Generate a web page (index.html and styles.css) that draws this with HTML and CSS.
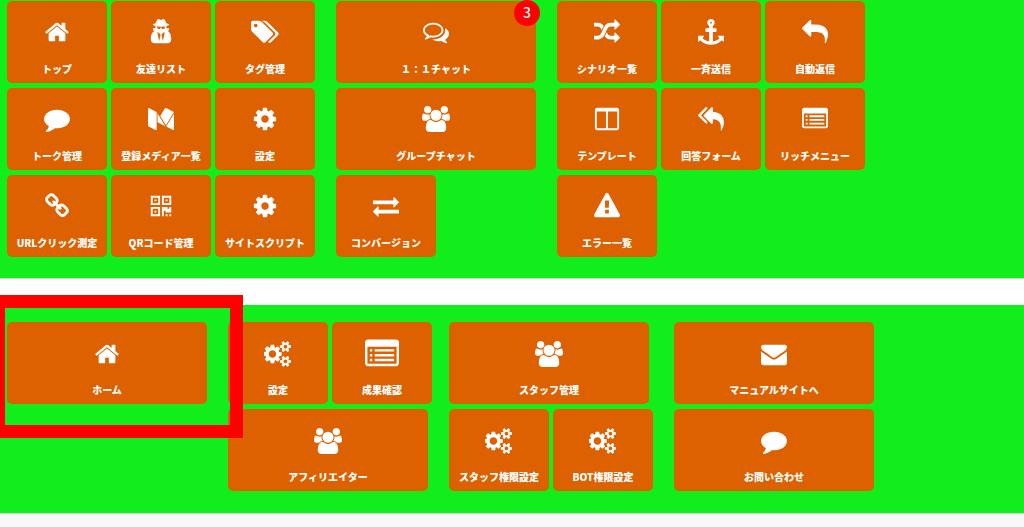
FILE: index.html
```html
<!DOCTYPE html>
<html lang="ja">
<head>
  <meta charset="UTF-8" />
  <meta name="viewport" content="width=device-width, initial-scale=1" />
  <title>管理メニュー</title>
  <link rel="stylesheet" href="styles.css">
</head>
<body>
  <svg class="sprite" aria-hidden="true">
    <symbol id="home" viewBox="0 0 1792 1792"><path d="M1472 992v480q0 26-19 45t-45 19h-384v-384h-256v384h-384q-26 0-45-19t-19-45v-480q0-1 .5-3t.5-3l575-474 575 474q1 2 1 6zm223-69l-62 74q-8 9-21 11h-3q-13 0-21-7l-692-577-692 577q-12 8-24 7-13-2-21-11l-62-74q-8-10-7-23.5t11-21.5l719-599q32-26 76-26t76 26l244 204v-195q0-14 9-23t23-9h192q14 0 23 9t9 23v408l219 182q10 8 11 21.5t-7 23.5z"/></symbol>
    <symbol id="secret" viewBox="0 0 1792 1792"><path d="M768 1536l96-448-96-128-128-64zM1024 1536l128-640-128 64-96 128zM1184 526q-2-4-4-6-10-8-96-8-70 0-167 19-7 2-21 2t-21-2q-97-19-167-19-86 0-96 8-2 2-4 6 2 18 4 27 2 3 7.500 6.500t7.500 10.500q2 4 7.500 20.500t7 20.500 7.500 17 8.500 17 9 14 12 13.500 14 9.500 17.500 8 20.500 4 24.500 2q36 0 59-12.500t32.500-30 14.500-34.500 11.500-29.500 17.500-12.500h12q11 0 17.500 12.500t11.500 29.500 14.500 34.500 32.500 30 59 12.500q13 0 24.500-2t20.500-4 17.500-8 14-9.500 12-13.500 9-14 8.500-17 7.500-17 7-20.500 7.500-20.500q2-7 7.500-10.500t7.500-6.500q2-9 4-27zM1600 1405q0 121-73 190t-194 69h-874q-121 0-194-69t-73-190q0-61 4.500-118t19-125.500 37.500-123.500 63.500-103.500 93.500-74.500l-90-220h214q-22-64-22-128 0-12 2-32-194-40-194-96 0-57 210-99 17-62 51.500-134t70.500-114q32-37 76-37 30 0 84 31t84 31 84-31 84-31q44 0 76 37 36 42 70.500 114t51.500 134q210 42 210 99 0 56-194 96 7 81-20 160h214l-82 225q63 33 107.500 96.500t65.500 143.500 29 151.500 8 148.500z"/></symbol>
    <symbol id="tags" viewBox="0 0 1920 1792"><path d="M448 448q0-53-37.500-90.500t-90.500-37.500-90.500 37.500-37.500 90.500 37.500 90.500 90.500 37.500 90.500-37.500 37.500-90.500zm1067 576q0 53-37 90l-491 492q-39 37-91 37-53 0-90-37l-715-716q-38-37-64.500-101t-26.500-117v-416q0-52 38-90t90-38h416q53 0 117 26.500t102 64.500l715 714q37 39 37 91zm384 0q0 53-37 90l-491 492q-39 37-91 37-36 0-59-14t-53-45l470-470q37-37 37-90 0-52-37-91l-715-714q-38-38-102-64.500t-117-26.500h224q53 0 117 26.500t102 64.500l715 714q37 39 37 91z"/></symbol>
    <symbol id="comment" viewBox="0 0 1792 1792"><path d="M1792 896q0 174-120 321.500t-326 233-450 85.500q-70 0-145-8-198 175-460 242-49 14-114 22-17 2-30.500-9t-17.500-29v-1q-3-4-.5-12t2-10 4.500-9.500l6-9 7-8.500 8-9q7-8 31-34.500t34.500-38 31-39.500 32.500-51 27-59 26-76q-157-89-247.500-220t-90.500-281q0-130 71-248.500t191-204.500 286-136.500 348-50.500q244 0 450 85.500t326 233 120 321.500z"/></symbol>
    <symbol id="medium" viewBox="0 0 1792 1792"><path d="M597 421v1173q0 25-12.500 42.500t-36.500 17.500q-17 0-33-8l-465-233q-21-10-35.500-33.500t-14.500-46.500v-1140q0-20 10-34t29-14q14 0 44 15l511 256q3 3 3 5zm64 101l534 866-534-266v-600zm1131 18v1054q0 25-14 40.500t-38 15.500-47-13l-441-220zm-3-120q0 3-256.500 419.500t-300.500 487.500l-390-634 324-527q17-28 52-28 14 0 26 6l541 270q4 2 4 6z"/></symbol>
    <symbol id="cog" viewBox="0 0 1792 1792"><path d="M1152 896q0-106-75-181t-181-75-181 75-75 181 75 181 181 75 181-75 75-181zm512-109v222q0 12-8 23t-20 13l-185 28q-19 54-39 91 35 50 107 138 10 12 10 25t-9 23q-27 37-99 108t-94 71q-12 0-26-9l-138-108q-44 23-91 38-16 136-29 186-7 28-36 28h-222q-14 0-24.500-8.500t-11.500-21.500l-28-184q-49-16-90-37l-141 107q-10 9-25 9-14 0-25-11-126-114-165-168-7-10-7-23 0-12 8-23 15-21 51-66.500t54-70.500q-27-50-41-99l-183-27q-13-2-21-12.500t-8-23.500v-222q0-12 8-23t19-13l186-28q14-46 39-92-40-57-107-138-10-12-10-24 0-10 9-23 26-36 98.500-107.500t94.500-71.500q13 0 26 10l138 107q44-23 91-38 16-136 29-186 7-28 36-28h222q14 0 24.500 8.500t11.500 21.500l28 184q49 16 90 37l142-107q9-9 24-9 13 0 25 10 129 119 165 170 7 8 7 22 0 12-8 23-15 21-51 66.500t-54 70.500q26 50 41 98l183 28q13 2 21 12.500t8 23.500z"/></symbol>
    <symbol id="link" viewBox="0 0 1792 1792"><path d="M1520 1216q0-40-28-68l-208-208q-28-28-68-28-42 0-72 32 3 3 19 18.500t21.500 21.500 15 19 13 25.500 3.500 27.500q0 40-28 68t-68 28q-15 0-27.500-3.500t-25.500-13-19-15-21.500-21.500-18.500-19q-33 31-33 73 0 40 28 68l206 207q27 27 68 27 40 0 68-26l147-146q28-28 28-67zm-703-705q0-40-28-68l-206-207q-28-28-68-28-39 0-68 27l-147 146q-28 28-28 67 0 40 28 68l208 208q27 27 68 27 42 0 72-31-3-3-19-18.500t-21.500-21.500-15-19-13-25.500-3.500-27.500q0-40 28-68t68-28q15 0 27.500 3.500t25.500 13 19 15 21.500 21.500 18.500 19q33-31 33-73zm895 705q0 120-85 203l-147 146q-83 83-203 83-121 0-204-85l-206-207q-83-83-83-203 0-123 88-209l-88-88q-86 88-208 88-120 0-204-84l-208-208q-84-84-84-204t85-203l147-146q83-83 203-83 121 0 204 85l206 207q83 83 83 203 0 123-88 209l88 88q86-88 208-88 120 0 204 84l208 208q84 84 84 204z"/></symbol>
    <symbol id="qrcode" viewBox="0 0 1792 1792"><path fill-rule="evenodd" d="M192 192h640v640h-640zM320 320v384h384v-384zM960 192h640v640h-640zM1088 320v384h384v-384zM192 960h640v640h-640zM320 1088v384h384v-384zM448 448h128v128h-128zM1216 448h128v128h-128zM448 1216h128v128h-128zM960 960h384v128h128v-128h128v384h-384v-128h-128v384h-128zM1216 1472h128v128h-128zM1472 1472h128v128h-128z"/></symbol>
    <symbol id="comments" viewBox="0 0 1792 1792"><path d="M704 384q-153 0-286 52t-211.500 141-78.500 191q0 82 53 158t149 132l97 56-35 84q34-20 62-39l44-31 53 10q78 14 153 14 153 0 286-52t211.500-141 78.500-191-78.500-191-211.500-141-286-52zm0-128q191 0 353.500 68.500t256.500 186.500 94 257-94 257-256.500 186.500-353.500 68.500q-86 0-176-16-124 88-278 128-36 9-86 16h-3q-11 0-20.500-8t-11.500-21q-1-3-1-6.500t.5-6.500 2-6l2.500-5 3.500-5.500 4-5 4.500-5 4-4.500q5-6 23-25t26-29.500 22.500-29 25-38.500 20.500-44q-124-72-195-177t-71-224q0-139 94-257t256.500-186.500 353.500-68.500zm822 1169q10 24 20.500 44t25 38.500 22.500 29 26 29.500 23 25q1 1 4 4.500t4.500 5 4 5 3.500 5.500l2.500 5 2 6 .5 6.500-1 6.500q-3 14-13 22t-22 7q-50-7-86-16-154-40-278-128-90 16-176 16-271 0-472-132 58 4 88 4 161 0 309-45t264-129q125-92 192-212t67-254q0-77-23-152 129 71 204 178t75 230q0 120-71 224.500t-195 176.500z"/></symbol>
    <symbol id="users" viewBox="0 0 1920 1792"><path d="M593 896q-162 5-265 128h-134q-82 0-138-40.500t-56-118.500q0-353 124-353 6 0 43.500 21t97.500 42.500 119 21.500q67 0 133-23-5 37-5 66 0 139 81 256zm1071 637q0 120-73 189.500t-194 69.500h-874q-121 0-194-69.500t-73-189.500q0-53 3.500-103.500t14-109 26.500-108.500 43-97.500 62-81 85.500-53.500 111.500-20q10 0 43 21.500t73 48 107 48 135 21.500 135-21.500 107-48 73-48 43-21.500q61 0 111.500 20t85.500 53.500 62 81 43 97.500 26.500 108.500 14 109 3.500 103.500zm-1024-1277q0 106-75 181t-181 75-181-75-75-181 75-181 181-75 181 75 75 181zm704 384q0 159-112.500 271.500t-271.500 112.500-271.500-112.500-112.500-271.500 112.500-271.500 271.500-112.500 271.500 112.500 112.500 271.500zm576 225q0 78-56 118.500t-138 40.500h-134q-103-123-265-128 81-117 81-256 0-29-5-66 66 23 133 23 59 0 119-21.500t97.500-42.500 43.500-21q124 0 124 353zm-128-609q0 106-75 181t-181 75-181-75-75-181 75-181 181-75 181 75 75 181z"/></symbol>
    <symbol id="exchange" viewBox="0 0 1792 1792"><path d="M1792 1184v192q0 13-9.500 22.500t-22.500 9.500h-1376v192q0 13-9.500 22.500t-22.500 9.500q-12 0-24-10l-319-320q-9-9-9-22 0-14 9-23l320-320q9-9 23-9 13 0 22.500 9.500t9.500 22.500v192h1376q13 0 22.500 9.500t9.500 22.500zm0-544q0 14-9 23l-320 320q-9 9-23 9-13 0-22.500-9.500t-9.500-22.500v-192h-1376q-13 0-22.500-9.500t-9.500-22.500v-192q0-13 9.500-22.500t22.500-9.500h1376v-192q0-14 9-23t23-9q12 0 24 10l319 319q9 9 9 23z"/></symbol>
    <symbol id="random" viewBox="0 0 1792 1792"><path d="M666 481q-60 92-137 273-22-45-37-72.500t-40.500-63.500-51-56.500-63-35-81.500-14.500h-224q-14 0-23-9t-9-23v-192q0-14 9-23t23-9h224q250 0 410 225zm1126 799q0 14-9 23l-320 320q-9 9-23 9-13 0-22.500-9.500t-9.500-22.500v-192q-32 0-85 .5t-81 1-73-1-71-5-64-10.500-63-18.500-58-28.500-59-40-55-53.500-56-69.500q59-93 136-273 22 45 37 72.500t40.500 63.500 51 56.500 63 35 81.500 14.500h256v-192q0-14 9-23t23-9q12 0 24 10l319 319q9 9 9 23zm0-896q0 14-9 23l-320 320q-9 9-23 9-13 0-22.500-9.500t-9.500-22.500v-192h-256q-48 0-87 15t-69 45-51 61.500-45 77.500q-32 62-78 171-29 66-49.500 111t-54 105-64 100-74 83-90 68.500-106.500 42-128 16.500h-224q-14 0-23-9t-9-23v-192q0-14 9-23t23-9h224q48 0 87-15t69-45 51-61.500 45-77.500q32-62 78-171 29-66 49.500-111t54-105 64-100 74-83 90-68.500 106.500-42 128-16.500h256v-192q0-14 9-23t23-9q12 0 24 10l319 319q9 9 9 23z"/></symbol>
    <symbol id="anchor" viewBox="0 0 1792 1792"><path d="M960 256q0-26-19-45t-45-19-45 19-19 45 19 45 45 19 45-19 19-45zm832 928v352q0 22-20 30-8 2-12 2-12 0-23-9l-93-93q-119 143-318.500 226.500t-429.500 83.500-429.500-83.500-318.500-226.500l-93 93q-9 9-23 9-4 0-12-2-20-8-20-30v-352q0-14 9-23t23-9h352q22 0 30 20 8 19-7 35l-100 100q67 91 189.500 153.500t271.500 82.500v-647h-192q-26 0-45-19t-19-45v-128q0-26 19-45t45-19h192v-163q-58-34-93-92.500t-35-128.500q0-106 75-181t181-75 181 75 75 181q0 70-35 128.500t-93 92.500v163h192q26 0 45 19t19 45v128q0 26-19 45t-45 19h-192v647q149-20 271.500-82.500t189.500-153.500l-100-100q-15-16-7-35 8-20 30-20h352q14 0 23 9t9 23z"/></symbol>
    <symbol id="reply" viewBox="0 0 1792 1792"><path d="M1792 1120q0 166-127 451-3 7-10.500 24t-13.500 30-13 22q-12 17-28 17-15 0-23.500-10t-8.500-25q0-9 2.500-26.500t2.500-23.500q5-68 5-123 0-101-17.500-181t-48.500-138.500-80-101-105.500-69.500-133-42.500-154-21.500-175.500-6h-224v256q0 26-19 45t-45 19-45-19l-512-512q-19-19-19-45t19-45l512-512q19-19 45-19t45 19 19 45v256h224q713 0 875 403 53 134 53 333z"/></symbol>
    <symbol id="reply-all" viewBox="0 0 1792 1792"><path d="M640 1082v70q0 42-39 59-13 5-25 5-27 0-45-19l-512-512q-19-19-19-45t19-45l512-512q29-31 70-14 39 17 39 59v69l-397 398q-19 19-19 45t19 45zm1152 58q0 58-17 133.500t-38.500 138-48 125-40.500 90.500l-20 40q-8 17-28 17-6 0-9-1-25-8-23-34 43-400-106-565-64-71-170.500-110.500t-267.500-52.500v251q0 42-39 59-13 5-25 5-27 0-45-19l-512-512q-19-19-19-45t19-45l512-512q29-31 70-14 39 17 39 59v262q411 28 599 221 169 173 169 509z"/></symbol>
    <symbol id="columns" viewBox="0 0 1792 1792"><path d="M224 1536h608v-1152h-640v1120q0 13 9.500 22.500t22.500 9.500zm1376-32v-1120h-640v1152h608q13 0 22.500-9.500t9.500-22.500zm128-1216v1216q0 66-47 113t-113 47h-1344q-66 0-113-47t-47-113v-1216q0-66 47-113t113-47h1344q66 0 113 47t47 113z"/></symbol>
    <symbol id="list" viewBox="0 0 1792 1792"><path fill-rule="evenodd" d="M160 128h1472q66 0 113 47t47 113v1088q0 66-47 113t-113 47h-1472q-66 0-113-47t-47-113v-1088q0-66 47-113t113-47zM128 512v864q0 32 32 32h1472q32 0 32-32v-864zM256 640h128v128h-128zM512 640h1024v128h-1024zM256 896h128v128h-128zM512 896h1024v128h-1024zM256 1152h128v128h-128zM512 1152h1024v128h-1024z"/></symbol>
    <symbol id="warning" viewBox="0 0 1792 1792"><path d="M1024 1375v-190q0-14-9.500-23.500t-22.500-9.500h-192q-13 0-22.500 9.500t-9.500 23.500v190q0 14 9.500 23.500t22.500 9.500h192q13 0 22.500-9.500t9.500-23.500zm-2-374l18-459q0-12-10-19-13-11-24-11h-220q-11 0-24 11-10 7-10 21l17 457q0 10 10 16.500t24 6.500h185q14 0 23.500-6.500t10.500-16.500zm-14-934l768 1408q35 63-2 126-17 29-46.500 46t-63.500 17h-1536q-34 0-63.500-17t-46.500-46q-37-63-2-126l768-1408q17-31 47-49t65-18 65 18 47 49z"/></symbol>
    <symbol id="cogs" viewBox="0 0 1920 1792"><path d="M832 896q0-106-75-181t-181-75-181 75-75 181 75 181 181 75 181-75 75-181zm768 512q0-52-38-90t-90-38-90 38-38 90q0 53 37.500 90.500t90.500 37.500 90.500-37.500 37.500-90.500zm0-1024q0-52-38-90t-90-38-90 38-38 90q0 53 37.500 90.500t90.500 37.500 90.500-37.500 37.500-90.500zm-384 421v185q0 10-7 19.500t-16 10.500l-155 24q-11 35-32 76 34 48 90 115 7 11 7 20 0 12-7 19-23 30-82.500 89.500t-78.500 59.500q-11 0-21-7l-115-90q-37 19-77 31-11 108-23 155-7 24-30 24h-186q-11 0-20-7.500t-10-17.500l-23-153q-34-10-75-31l-118 89q-7 7-20 7-11 0-21-8-144-133-144-160 0-9 7-19 10-14 41-53t47-61q-23-44-35-82l-152-24q-10-1-17-9.500t-7-19.500v-185q0-10 7-19.500t16-10.500l155-24q11-35 32-76-34-48-90-115-7-11-7-20 0-12 7-20 22-30 82-89t79-59q11 0 21 7l115 90q34-18 77-32 11-108 23-154 7-24 30-24h186q11 0 20 7.500t10 17.500l23 153q34 10 75 31l118-89q8-7 20-7 11 0 21 8 144 133 144 160 0 9-7 19-12 16-42 54t-45 60q23 48 34 82l152 23q10 2 17 10.500t7 19.500zm640 533v140q0 16-149 31-12 27-30 52 51 113 51 138 0 4-4 7-122 71-124 71-8 0-46-47t-52-68q-20 2-30 2t-30-2q-14 21-52 68t-46 47q-2 0-124-71-4-3-4-7 0-25 51-138-18-25-30-52-149-15-149-31v-140q0-16 149-31 13-29 30-52-51-113-51-138 0-4 4-7 4-2 35-20t59-34 30-16q8 0 46 46.500t52 67.500q20-2 30-2t30 2q51-71 92-112l6-2q4 0 124 70 4 3 4 7 0 25-51 138 17 23 30 52 149 15 149 31zm0-1024v140q0 16-149 31-12 27-30 52 51 113 51 138 0 4-4 7-122 71-124 71-8 0-46-47t-52-68q-20 2-30 2t-30-2q-14 21-52 68t-46 47q-2 0-124-71-4-3-4-7 0-25 51-138-18-25-30-52-149-15-149-31v-140q0-16 149-31 13-29 30-52-51-113-51-138 0-4 4-7 4-2 35-20t59-34 30-16q8 0 46 46.500t52 67.500q20-2 30-2t30 2q51-71 92-112l6-2q4 0 124 70 4 3 4 7 0 25-51 138 17 23 30 52 149 15 149 31z"/></symbol>
    <symbol id="envelope" viewBox="0 0 1792 1792"><path d="M1792 710v794q0 66-47 113t-113 47h-1472q-66 0-113-47t-47-113v-794q44 49 101 87 362 246 497 345 57 42 92.500 65.500t94.500 48 110 24.500h2q51 0 110-24.500t94.500-48 92.500-65.500q170-123 498-345 57-39 100-87zm0-294q0 79-49 151t-122 123q-376 261-468 325-10 7-42.500 31t-54 38-52 32.500-57.500 27-50 9h-2q-23 0-50-9t-57.500-27-52-32.500-54-38-42.500-31q-91-64-262-182.500t-205-142.500q-62-42-117-115.500t-55-136.500q0-78 41.500-130t118.500-52h1472q65 0 112.500 47t47.500 113z"/></symbol>
  </svg>

  <nav class="menu menu-main">
    <div class="group cols-3">
      <a class="tile" href="#"><svg class="icon"><use href="#home"/></svg><span>トップ</span></a>
      <a class="tile" href="#"><svg class="icon"><use href="#secret"/></svg><span>友達リスト</span></a>
      <a class="tile" href="#"><svg class="icon"><use href="#tags"/></svg><span>タグ管理</span></a>
      <a class="tile" href="#"><svg class="icon"><use href="#comment"/></svg><span>トーク管理</span></a>
      <a class="tile" href="#"><svg class="icon"><use href="#medium"/></svg><span>登録メディア一覧</span></a>
      <a class="tile" href="#"><svg class="icon"><use href="#cog"/></svg><span>設定</span></a>
      <a class="tile" href="#"><svg class="icon"><use href="#link"/></svg><span>URLクリック測定</span></a>
      <a class="tile" href="#"><svg class="icon"><use href="#qrcode"/></svg><span>QRコード管理</span></a>
      <a class="tile" href="#"><svg class="icon"><use href="#cog"/></svg><span>サイトスクリプト</span></a>
    </div>
    <div class="group">
      <a class="tile wide" href="#"><svg class="icon"><use href="#comments"/></svg><span>１：１チャット</span><b class="badge">3</b></a>
      <a class="tile wide" href="#"><svg class="icon"><use href="#users"/></svg><span>グループチャット</span></a>
      <a class="tile" href="#"><svg class="icon"><use href="#exchange"/></svg><span>コンバージョン</span></a>
    </div>
    <div class="group cols-3">
      <a class="tile" href="#"><svg class="icon"><use href="#random"/></svg><span>シナリオ一覧</span></a>
      <a class="tile" href="#"><svg class="icon"><use href="#anchor"/></svg><span>一斉送信</span></a>
      <a class="tile" href="#"><svg class="icon"><use href="#reply"/></svg><span>自動返信</span></a>
      <a class="tile" href="#"><svg class="icon"><use href="#columns"/></svg><span>テンプレート</span></a>
      <a class="tile" href="#"><svg class="icon"><use href="#reply-all"/></svg><span>回答フォーム</span></a>
      <a class="tile" href="#"><svg class="icon"><use href="#list"/></svg><span>リッチメニュー</span></a>
      <a class="tile" href="#"><svg class="icon"><use href="#warning"/></svg><span>エラー一覧</span></a>
    </div>
  </nav>

  <nav class="menu menu-sub">
    <div class="group">
      <a class="tile wide marked" href="#"><svg class="icon"><use href="#home"/></svg><span>ホーム</span></a>
    </div>
    <div class="group">
      <a class="tile" href="#"><svg class="icon"><use href="#cogs"/></svg><span>設定</span></a>
      <a class="tile" href="#"><svg class="icon icon-large"><use href="#list"/></svg><span>成果確認</span></a>
      <a class="tile wide" href="#"><svg class="icon"><use href="#users"/></svg><span>アフィリエイター</span></a>
    </div>
    <div class="group trailing">
      <a class="tile wide" href="#"><svg class="icon"><use href="#users"/></svg><span>スタッフ管理</span></a>
      <a class="tile" href="#"><svg class="icon"><use href="#cogs"/></svg><span>スタッフ権限設定</span></a>
      <a class="tile" href="#"><svg class="icon"><use href="#cogs"/></svg><span>BOT権限設定</span></a>
    </div>
    <div class="group">
      <a class="tile wide" href="#"><svg class="icon"><use href="#envelope"/></svg><span>マニュアルサイトへ</span></a>
      <a class="tile wide" href="#"><svg class="icon"><use href="#comment"/></svg><span>お問い合わせ</span></a>
    </div>
  </nav>
</body>
</html>
```

FILE: styles.css
```css
html {
  background: #f8f8f8;
}

body {
  margin: 0;
  background: #ffffff;
  font-family: "Noto Sans CJK JP", sans-serif;
}

.sprite {
  display: none;
}

.menu {
  display: flex;
  gap: 17px;
  background: #11ee1b;
  border-bottom: 1px solid #c8dcc8;
}

.menu-main {
  padding: 1px 7px 21px;
}

.menu-sub {
  margin-top: 26px;
  padding: 17px 7px 22px;
}

.group {
  display: grid;
  grid-template-columns: repeat(2, 100px);
  align-content: start;
  gap: 5px 4px;
}

.cols-3 {
  grid-template-columns: repeat(3, 100px);
}

.cols-3,
.trailing {
  padding-right: 4px;
}

.tile {
  position: relative;
  display: flex;
  flex-direction: column;
  align-items: center;
  justify-content: space-between;
  box-sizing: border-box;
  height: 82px;
  padding: 18px 0 6px;
  border-radius: 5px;
  background: #dd6100;
  color: #ffffff;
  font-size: 10px;
  font-weight: 900;
  line-height: 16px;
  text-decoration: none;
  white-space: nowrap;
}

.tile:hover {
  background: #c45600;
}

.wide {
  grid-column: span 2;
  width: 200px;
}

.icon {
  width: 28px;
  height: 26px;
  fill: currentColor;
}

.menu-sub .tile {
  padding-top: 19px;
}

.icon-large {
  width: 36px;
  height: 34px;
  margin: -4px 0;
}

.badge {
  position: absolute;
  top: -1px;
  right: -4px;
  width: 26px;
  height: 26px;
  border-radius: 50%;
  background: #ff0000;
  font-size: 14px;
  font-weight: 500;
  line-height: 25px;
  text-align: center;
}

/* red frame around the home tile */
.marked::after {
  content: "";
  position: absolute;
  z-index: 1;
  top: -27px;
  right: -36px;
  bottom: -34px;
  left: -15px;
  border: 13px solid #ff0000;
  pointer-events: none;
}
```
